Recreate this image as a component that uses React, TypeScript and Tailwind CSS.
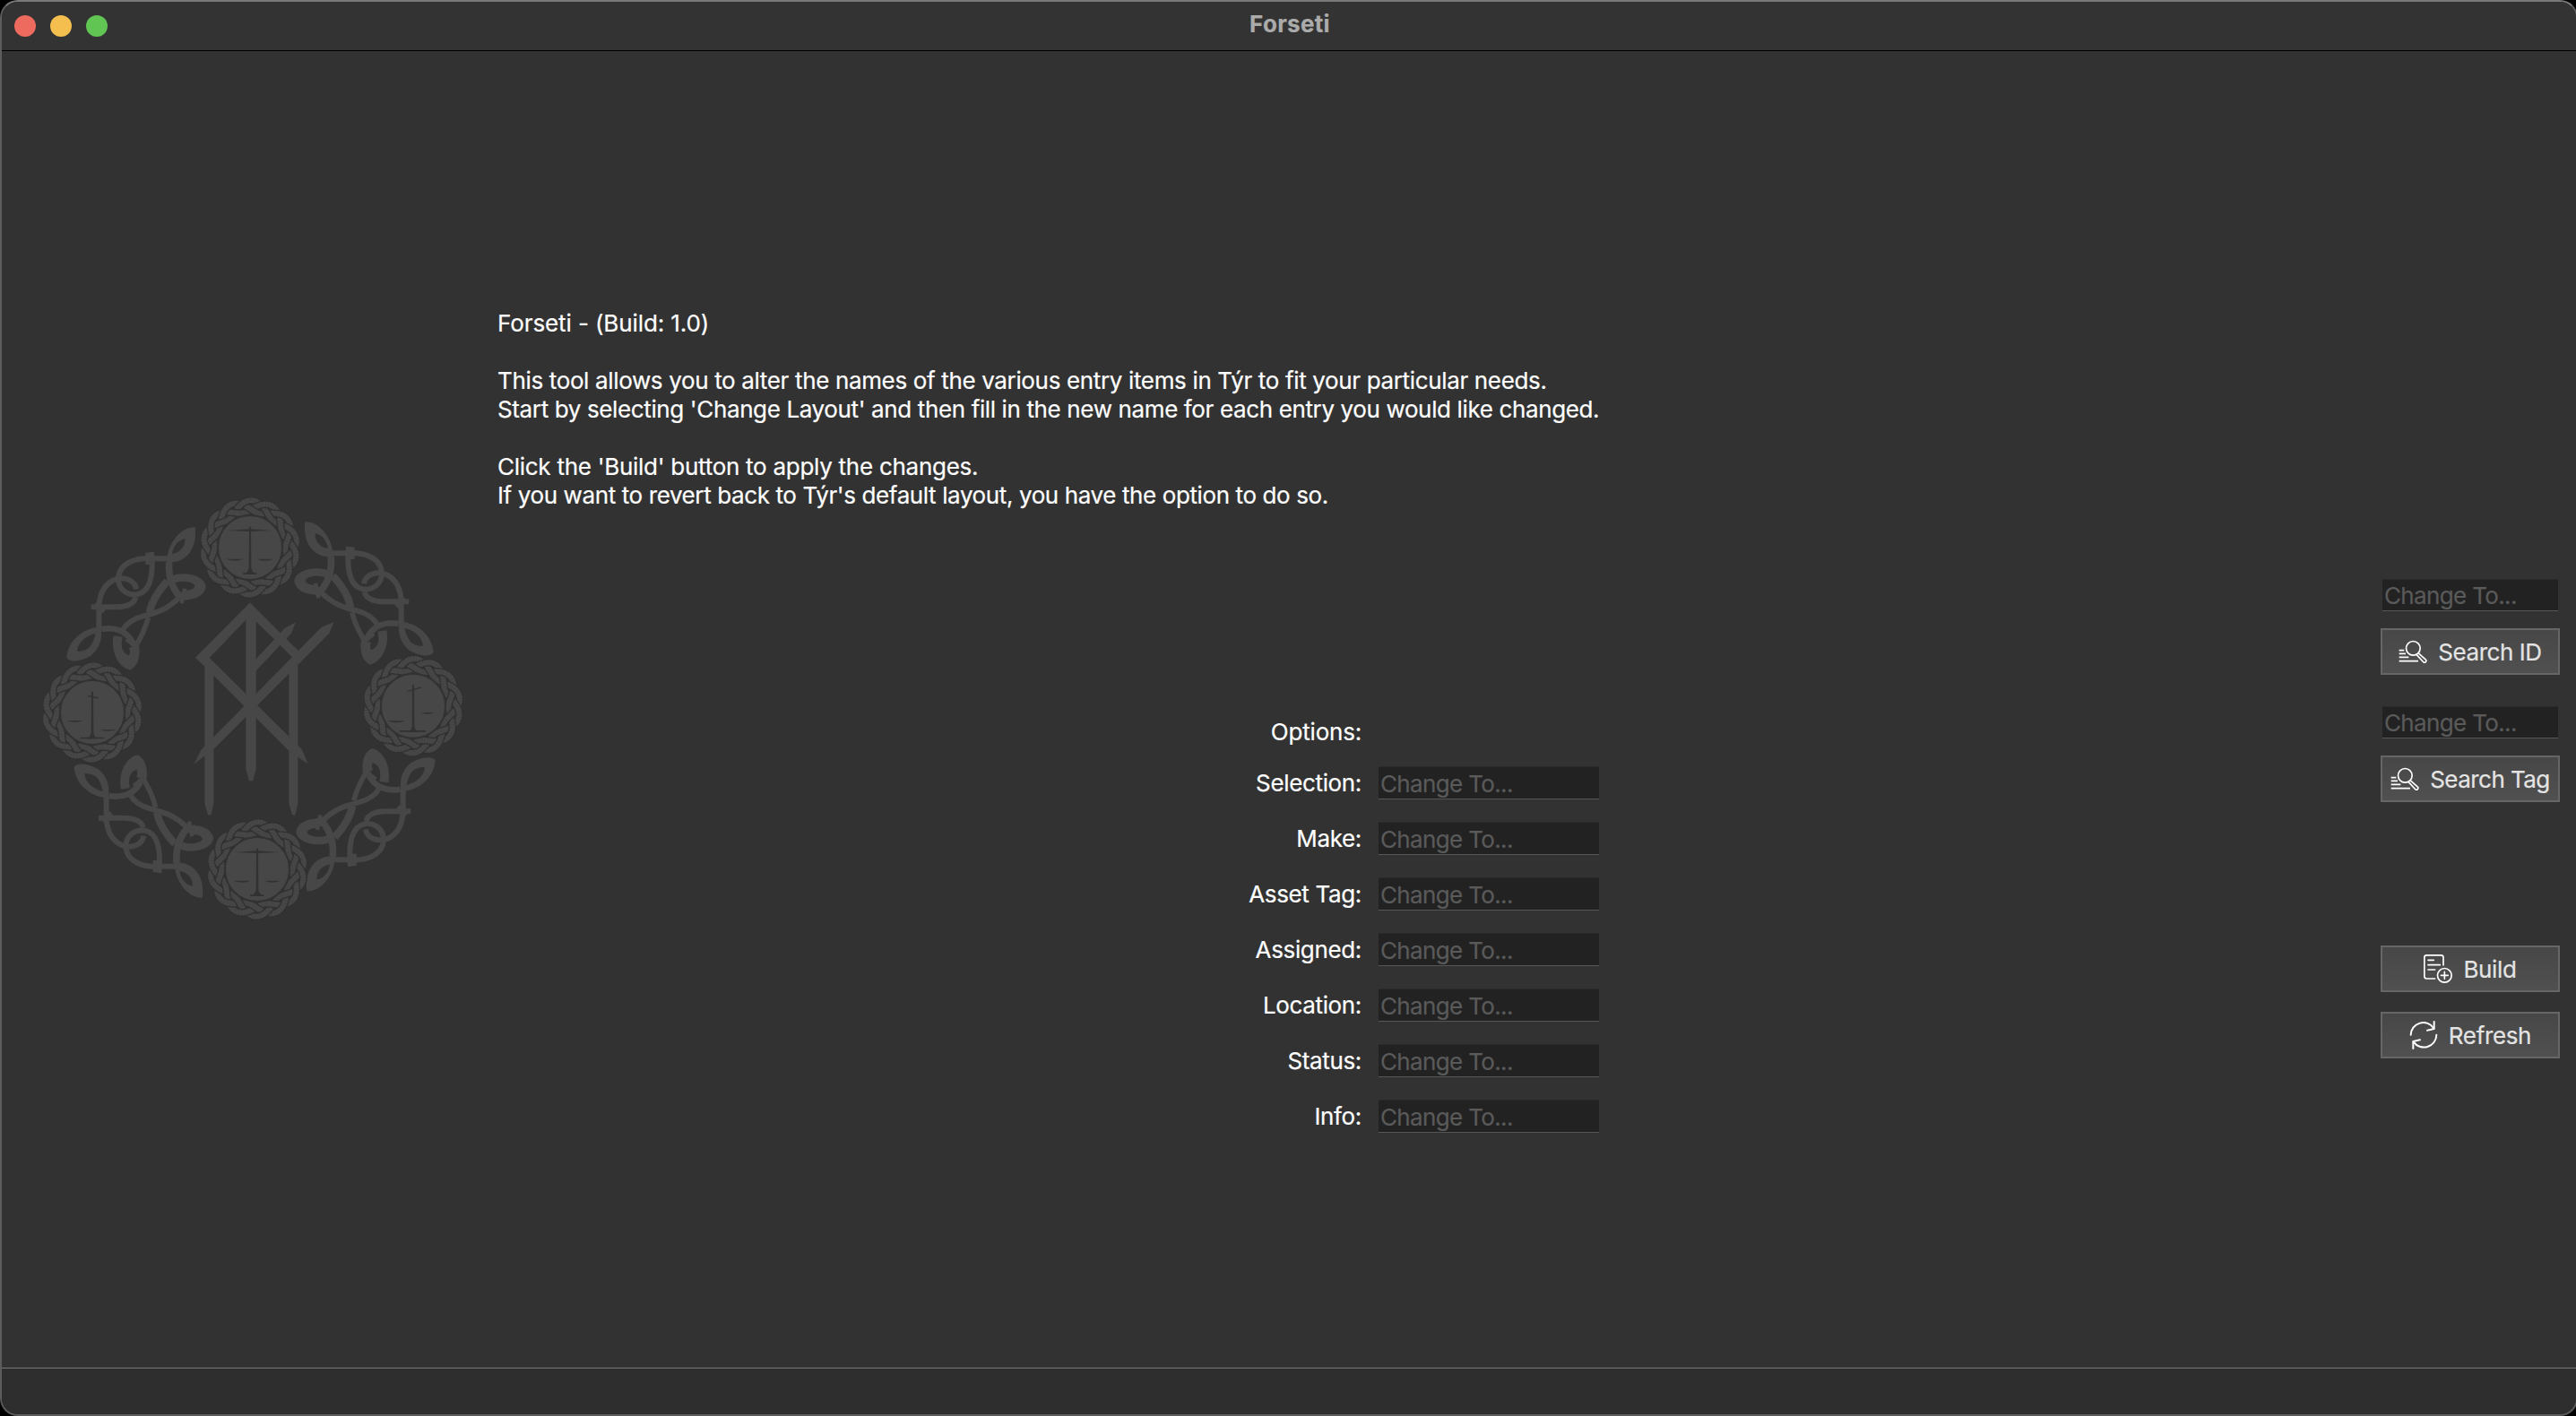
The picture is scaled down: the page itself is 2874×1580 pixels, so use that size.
import React from "react";

const INK = "#474747";
const GROUND = "#323232";

type Segment = { d: string; depth: number };

/* One strand wound three times round the disc, which reads as a three-strand braid. */
const braid: Segment[] = (() => {
  const count = 336;
  const point = (t: number) => {
    const phi = (14 / 3) * t + 0.4;
    const r = 138 + 20 * Math.sin(phi);
    return [r * Math.cos(t), r * Math.sin(t)];
  };
  const out: Segment[] = [];
  for (let i = 0; i < count; i++) {
    const a = (i / count) * Math.PI * 6;
    const b = ((i + 1.25) / count) * Math.PI * 6;
    const [x1, y1] = point(a);
    const [x2, y2] = point(b);
    out.push({
      d: `M${x1.toFixed(1)} ${y1.toFixed(1)}L${x2.toFixed(1)} ${y2.toFixed(1)}`,
      depth: Math.sin(2 * ((14 / 3) * ((a + b) / 2) + 0.4)),
    });
  }
  return out.sort((p, q) => p.depth - q.depth);
})();

function Medallion({ x, y, scales }: { x: number; y: number; scales: string }) {
  return (
    <g transform={`translate(${x} ${y})`} fill="none">
      {braid.map((s, i) => (
        <g key={i}>
          <path d={s.d} stroke={GROUND} strokeWidth="26" />
          <path d={s.d} stroke={INK} strokeWidth="18" />
        </g>
      ))}
      <circle r="108" fill={INK} stroke={GROUND} strokeWidth="6" />
      <path d="M-3 -70H3L4 70Q7 82 18 88H-18Q-7 82 -4 70Z" fill={GROUND} />
      <path d={scales} fill={GROUND} />
    </g>
  );
}

const LEVEL =
  "M-76 -57L0 -62L72 -57L0 -54ZM-80 38H-22Q-50 50 -80 38ZM24 38H78Q50 50 24 38ZM-24 85H22V90H-24Z";
const LEFT_UP =
  "M-16 -58L20 -50V-46L-16 -54ZM-85 27H-30Q-58 37 -85 27ZM26 58H82Q54 67 26 58ZM-40 83H40V88H-40Z";
const RIGHT_UP =
  "M-20 -50L26 -64V-60L-20 -46ZM-88 50H-26Q-58 62 -88 50ZM26 22H72Q50 33 26 22ZM-46 82H42V87H-46Z";

function Vine({ transform }: { transform?: string }) {
  return (
    <g transform={transform}>
      <g fill={INK} fillRule="evenodd">
        <path d="M470 246C476 192 520 142 563 145C570 205 545 266 468 263ZM486 234C512 232 532 208 529 184C508 186 490 208 486 234Z" />
        <path d="M248 478C190 482 138 522 133 582C145 600 184 592 214 575C243 552 254 520 248 478ZM230 500C196 508 170 532 168 560C200 562 230 540 230 500Z" />
        <path d="M485 308C530 290 600 308 599 347C592 374 562 388 528 387L530 356C548 358 562 350 562 340C552 326 520 322 492 332Z" />
        <path d="M290 508C280 560 305 614 345 623C374 610 382 572 374 535L342 550C346 560 346 568 342 574C320 566 312 545 320 512Z" />
      </g>
      <g fill="none" stroke={INK} strokeWidth="18">
        <path d="M490 250H425C370 245 308 262 306 318C307 352 335 375 370 370C415 360 424 300 417 228" />
        <path d="M366 352C362 322 325 308 292 321C256 338 242 375 241 415V470C241 510 230 545 200 570" />
        <path d="M215 412H300C335 412 360 400 364 380" />
        <path d="M404 230V270" strokeWidth="14" />
        <path d="M228 402L258 428" strokeWidth="16" />
        <path d="M476 262C472 320 490 360 525 390" strokeWidth="23" />
        <path d="M512 378C470 422 430 432 390 442C352 452 332 468 320 490" />
        <path d="M470 325C438 360 416 400 410 430" strokeWidth="25" />
        <path d="M406 448C395 490 380 520 358 552" strokeWidth="17" />
        <path d="M250 486C295 478 340 492 358 540" strokeWidth="20" />
        <path d="M500 360L538 385M518 400L528 350" strokeWidth="13" />
        <path d="M332 520L372 550" strokeWidth="13" />
      </g>
    </g>
  );
}

function Emblem() {
  return (
    <svg viewBox="0 0 1500 1500" className="size-[500px] shrink-0" aria-hidden>
      <Vine />
      <Vine transform="matrix(-1 0 0 1 1494 -18)" />
      <Vine transform="matrix(1 0 0 -1 25 1530)" />
      <Vine transform="matrix(-1 0 0 -1 1500 1508)" />
      <Medallion x={747} y={213} scales={LEVEL} />
      <Medallion x={219} y={765} scales={LEFT_UP} />
      <Medallion x={1293} y={743} scales={RIGHT_UP} />
      <Medallion x={771} y={1290} scales={LEVEL} />
      <g fill={INK}>
        <path d="M733 420H767V955L756 994H744L733 955Z" />
        <path d="M595 600H625V1070L616 1108H606L595 1070Z" />
        <path d="M877 600H907V1070L898 1108H888L877 1070Z" />
        <path d="M747 397L929 579L912 602L893 585L747 440L611 582L920 888L941 937L880 896L564 581Z" />
        <path d="M1028 462L1012 500L625 888L559 938L583 890L985 480Z" />
        <path d="M900 462L885 500L765 628V588L862 484Z" />
      </g>
    </svg>
  );
}

function SearchIcon() {
  return (
    <svg viewBox="0 0 96 96" className="size-8 shrink-0" fill="none" stroke="#fff" strokeWidth="5" strokeLinecap="round">
      <circle cx="49" cy="37" r="23.5" />
      <path d="M2 44H19M2 55H24M2 67H34M2 80H66" strokeLinecap="butt" strokeWidth="5.5" />
      <path d="M66 53L92 76A6 6 0 0 1 84 84L60 58" strokeLinejoin="round" />
    </svg>
  );
}

function BuildIcon() {
  return (
    <svg viewBox="0 0 96 96" className="size-8 shrink-0" fill="none" stroke="#fff" strokeWidth="5" strokeLinecap="round">
      <path d="M38 81H10Q2.5 81 2.5 73V10Q2.5 2.5 10 2.5H58Q66 2.5 66 10V36" />
      <path d="M15 19H34M15 35H55M15 51H38" />
      <circle cx="70" cy="70" r="23.5" />
      <path d="M70 58V82M58 70H82" />
    </svg>
  );
}

function RefreshIcon() {
  return (
    <svg viewBox="0 0 96 96" className="size-8 shrink-0" fill="none" stroke="#fff" strokeWidth="6" strokeLinecap="round" strokeLinejoin="round">
      <path d="M5 47A42 42 0 0 1 82 25" />
      <path d="M83 3V27L60 32" />
      <path d="M91 47A42 42 0 0 1 14 70" />
      <path d="M13 93V69L36 64" />
    </svg>
  );
}

function Field({ size }: { size: string }) {
  return (
    <input
      placeholder="Change To..."
      className={`${size} block rounded-none border-t border-b border-t-[#2b2b2b] border-b-[#565656] bg-[#222222] px-0.5 text-[26px] tracking-[-0.65px] text-white outline-none placeholder:text-[#5a5a5a]`}
    />
  );
}

function ActionButton({ icon, className, children }: { icon: React.ReactNode; className: string; children: string }) {
  return (
    <button
      className={`${className} flex h-[52px] w-[200px] items-center justify-center gap-3 border-2 border-[#666666] bg-linear-to-b from-[#474747] to-[#505050] text-[26px] leading-8 whitespace-nowrap text-[#e4e4e4]`}
    >
      {icon}
      <span className="pt-0.5">{children}</span>
    </button>
  );
}

const rows = ["Selection:", "Make:", "Asset Tag:", "Assigned:", "Location:", "Status:", "Info:"];

export default function App() {
  return (
    <div className="h-[1580px] w-[2874px] overflow-hidden bg-black font-['Inter',sans-serif] [-webkit-text-stroke:0.2px_currentColor]">
      <div className="flex h-full w-[2876px] flex-col overflow-hidden rounded-[20px] border-2 border-[#5c5c5c] border-t-[#7a7a7a] bg-[#323232]">
        <header className="grid h-[55px] shrink-0 grid-cols-3 items-center border-b border-black bg-[#333333]">
          <div className="flex gap-4 pl-3.5">
            <span className="size-6 rounded-full bg-[#ed6a5e]" />
            <span className="size-6 rounded-full bg-[#f5bf4f]" />
            <span className="size-6 rounded-full bg-[#61c554]" />
          </div>
          <h1 className="pb-1 pl-0.5 text-center text-[26px] leading-8 font-bold tracking-[0.3px] text-[#ababab]">Forseti</h1>
        </header>

        <main className="flex grow">
          <div className="pt-[483px] pl-7">
            <Emblem />
          </div>

          <section className="ml-[25px] w-[1229px] pt-[288px]">
            <div className="text-[26px] leading-8 whitespace-nowrap text-white">
              <p className="tracking-[-0.1px]">Forseti - (Build: 1.0)</p>
              <p className="mt-8 tracking-[-0.35px]">
                This tool allows you to alter the names of the various entry items in Týr to fit your particular needs.
              </p>
              <p className="tracking-[-0.37px]">
                Start by selecting 'Change Layout' and then fill in the new name for each entry you would like changed.
              </p>
              <p className="mt-8 tracking-[-0.27px]">Click the 'Build' button to apply the changes.</p>
              <p className="tracking-[-0.39px]">
                If you want to revert back to Týr's default layout, you have the option to do so.
              </p>
            </div>

            <div className="mt-[232px] flex flex-col text-[26px] leading-8 text-white">
              <div className="mr-[265px] h-[54px] text-right tracking-[-0.2px]">Options:</div>
              <div className="flex flex-col gap-[25px]">
                {rows.map((row) => (
                  <div key={row} className="flex h-[37px] items-center justify-end">
                    <label className="mr-[19px] tracking-[-0.35px]">{row}</label>
                    <Field size="w-[246px] h-[37px] pt-0.5" />
                  </div>
                ))}
              </div>
            </div>
          </section>

          <aside className="mr-[18px] ml-auto flex flex-col items-center pt-[589px]">
            <Field size="w-[196px] h-[36px]" />
            <ActionButton icon={<SearchIcon />} className="mt-[19px] tracking-[-0.45px]">
              Search ID
            </ActionButton>
            <div className="h-[35px]" />
            <Field size="w-[196px] h-[36px]" />
            <ActionButton icon={<SearchIcon />} className="mt-[19px] tracking-[-0.55px]">
              Search Tag
            </ActionButton>
            <ActionButton icon={<BuildIcon />} className="mt-[160px] tracking-[-0.35px]">
              Build
            </ActionButton>
            <ActionButton icon={<RefreshIcon />} className="mt-[22px] tracking-[-0.35px]">
              Refresh
            </ActionButton>
          </aside>
        </main>

        <footer className="h-[52px] shrink-0 border-t border-[#787878] bg-[#2e2e2e]" />
      </div>
    </div>
  );
}
